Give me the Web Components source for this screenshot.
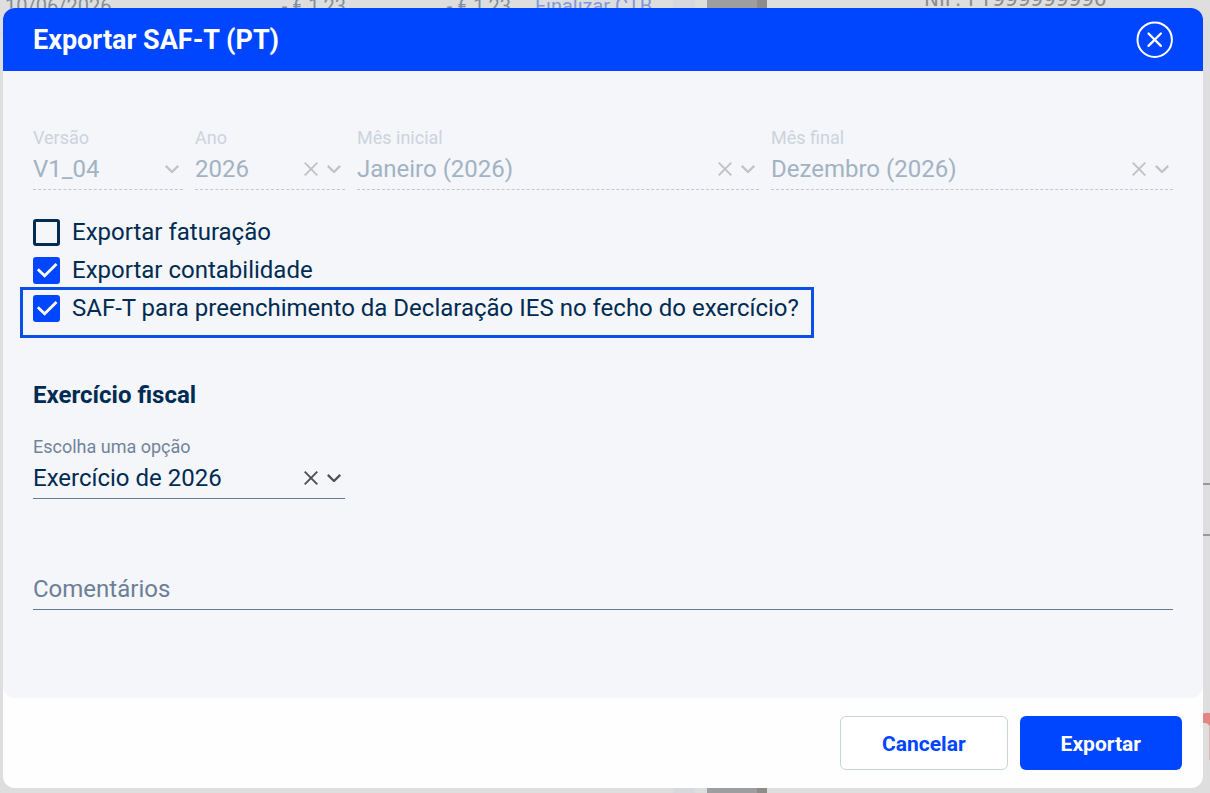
<!DOCTYPE html>
<html lang="pt">
<head>
<meta charset="utf-8">
<title>Exportar SAF-T (PT)</title>
<style>
  body { margin: 0; font-family: Roboto, "Liberation Sans", sans-serif; color: #002b52; background: #dedede; }
</style>
</head>
<body>
<app-shell>
  <page-behind slot="page"></page-behind>
  <modal-dialog heading="Exportar SAF-T (PT)">
    <field-row>
      <select-field label="Versão" value="V1_04" disabled></select-field>
      <select-field label="Ano" value="2026" disabled clearable></select-field>
      <select-field label="Mês inicial" value="Janeiro (2026)" disabled clearable></select-field>
      <select-field label="Mês final" value="Dezembro (2026)" disabled clearable></select-field>
    </field-row>
    <check-list>
      <check-option>Exportar faturação</check-option>
      <check-option checked>Exportar contabilidade</check-option>
      <check-option checked highlighted>SAF-T para preenchimento da Declaração IES no fecho do exercício?</check-option>
    </check-list>
    <form-section heading="Exercício fiscal">
      <select-field label="Escolha uma opção" value="Exercício de 2026" clearable></select-field>
    </form-section>
    <comment-field label="Comentários"></comment-field>
    <action-button slot="actions">Cancelar</action-button>
    <action-button slot="actions" primary>Exportar</action-button>
  </modal-dialog>
</app-shell>

<script>
function define(name, render) {
  customElements.define(name, class extends HTMLElement {
    connectedCallback() {
      if (this.shadowRoot) return;
      const template = document.createElement('template');
      template.innerHTML = render(this);
      this.attachShadow({ mode: 'open' }).append(template.content.cloneNode(true));
    }
  });
}

/* The page and the dialog share one grid cell, the dialog on top. */
define('app-shell', () => `
  <style>
    :host { display: grid; min-height: 100vh; grid-template: minmax(0, 1fr) / minmax(0, 1fr); }
    ::slotted(*) { grid-area: 1 / 1; }
  </style>
  <slot name="page"></slot><slot></slot>`);

define('page-behind', () => `
  <style>
    :host { display: grid; grid-template-columns: 707px 60px minmax(0, 1fr); overflow: hidden; background: #dedede; }
    .list { display: grid; grid-template-columns: 1fr 22px 12px; }
    .row { display: grid; grid-template-columns: 165px 176px 165px 1fr; column-gap: 0; margin-top: -6px; padding-left: 5px;
           height: 39px; border-bottom: 1px solid #d4d6d8; font-size: 20px; line-height: 24px; color: #7f8f9c; }
    .amount { text-align: right; }
    .row a { padding-left: 24px; color: #7f97de; text-decoration: none; }
    .track { background: #d8d9de; }
    .gap { border-right: 10px solid #8d8c8b; background: #9d9ea0; }
    .doc { display: flex; flex-direction: column; align-items: flex-end; }
    .nif { align-self: stretch; margin-top: -13px; padding-left: 157px; font: 20px/24px "DejaVu Sans", sans-serif; color: #8b8b8b; }
    .box { width: 40px; height: 49px; margin-top: 472px; border: solid #999; border-width: 2px 0; }
    .stamp { margin-top: 176px; flex: none; }
  </style>
  <div class="list">
    <div class="row"><span>10/06/2026</span><span class="amount">- € 1,23</span><span class="amount">- € 1,23</span><a href="#">Finalizar CTB</a></div>
    <div class="track"></div>
  </div>
  <div class="gap"></div>
  <div class="doc">
    <div class="nif">NIF: PT999999990</div>
    <div class="box"></div>
    <svg class="stamp" width="10" height="48" viewBox="0 0 10 48" aria-hidden="true">
      <path d="M0 3Q5 0 10 1V15Q9 12 6 11H0Z" fill="#e28583"/><path d="M9 14h1v34H9z" fill="#e3b5b4"/>
    </svg>
  </div>`);

define('modal-dialog', host => `
  <style>
    :host { display: flex; flex-direction: column; margin: 8px 7px 5px 3px; border-radius: 12px; overflow: hidden; background: #fefefe; z-index: 1; }
    header { display: flex; justify-content: space-between; align-items: center; box-sizing: border-box; height: 63px; padding: 0 30px; background: #0045ff; color: #fff; }
    h1 { margin: 0; font-size: 27px; line-height: 32px; font-weight: 700; }
    button { display: flex; padding: 0; border: 0; background: none; color: inherit; cursor: pointer; }
    main { flex: 1; padding: 56px 30px; border-radius: 0 0 12px 12px; background: #f4f6fa; }
    footer { display: flex; justify-content: flex-end; gap: 12px; padding: 18px 21px; }
  </style>
  <header>
    <h1>${host.getAttribute('heading')}</h1>
    <button type="button" aria-label="Fechar">
      <svg width="37" height="37" viewBox="0 0 37 37" fill="none" stroke="currentColor" stroke-width="2" aria-hidden="true">
        <circle cx="18.7" cy="18.7" r="17.2"/><path d="M12.5 12.5l12.4 12.4M24.9 12.5L12.5 24.9" stroke-width="2.3" stroke-linecap="round"/>
      </svg>
    </button>
  </header>
  <main><slot></slot></main>
  <footer><slot name="actions"></slot></footer>`);

define('field-row', () => `
  <style>:host { display: grid; grid-template-columns: 150px 150px 1fr 1fr; gap: 12px; }</style>
  <slot></slot>`);

define('select-field', host => {
  const off = host.hasAttribute('disabled') ? 'disabled' : '';
  const clear = host.hasAttribute('clearable') ? `
    <button type="button" aria-label="Limpar" ${off}>
      <svg width="14" height="14" viewBox="0 0 14 14" aria-hidden="true"><path d="M.7.7l12.6 12.6M13.3.7L.7 13.3"/></svg>
    </button>` : '';
  return `
  <style>
    :host { display: block; --label: #71849b; --value: #002b52; --icon: #4d4f52; --line: 1px solid #627c98; }
    :host([disabled]) { --label: #ccd3dd; --value: #a3b2c3; --icon: #c0c2c5; --line: 1px dashed #c3c8ce; }
    label { display: block; font-size: 18px; line-height: 22px; color: var(--label); }
    .control { display: grid; height: 40px; border-bottom: var(--line); }
    select { grid-area: 1 / 1; min-width: 0; margin: 0; padding: 0; border: 0; outline: 0; appearance: none; background: none;
             font: 24px/40px Roboto, "Liberation Sans", sans-serif; color: var(--value); opacity: 1; }
    .icons { grid-area: 1 / 1; justify-self: end; align-self: center; display: flex; align-items: center; gap: 9px; padding-right: 4px; pointer-events: none; }
    button { display: flex; padding: 0; border: 0; background: none; pointer-events: auto; }
    svg { fill: none; stroke: var(--icon); stroke-width: 1.9; }
  </style>
  <label for="choice">${host.getAttribute('label')}</label>
  <div class="control">
    <select id="choice" ${off}><option>${host.getAttribute('value')}</option></select>
    <div class="icons">${clear}
      <svg width="14" height="8" viewBox="0 0 14 8" aria-hidden="true"><path d="M.8.9L7 7 13.2.9" style="stroke-width:2.2"/></svg>
    </div>
  </div>`;
});

define('check-list', () => `
  <style>:host { display: flex; flex-direction: column; align-items: flex-start; gap: 11px; margin-top: 29px; }</style>
  <slot></slot>`);

define('check-option', host => `
  <style>
    :host { display: block; position: relative; }
    label { display: flex; align-items: center; gap: 12px; font-size: 24px; line-height: 27px; }
    .box { display: grid; }
    input { grid-area: 1 / 1; width: 27px; height: 27px; margin: 0; appearance: none; box-sizing: border-box; border: 3px solid #002b52; border-radius: 3px; }
    input:checked { border-color: #0045ff; background: #0045ff; }
    svg { grid-area: 1 / 1; visibility: hidden; pointer-events: none; }
    input:checked + svg { visibility: visible; }
    :host([highlighted])::after { content: ""; position: absolute; inset: -8px -15px -16px -13px; border: 3px solid #0a4fe6; pointer-events: none; }
  </style>
  <label>
    <span class="box">
      <input type="checkbox" ${host.hasAttribute('checked') ? 'checked' : ''}>
      <svg width="27" height="27" viewBox="0 0 27 27" fill="none" stroke="#fff" stroke-width="2.8" aria-hidden="true"><path d="M4.8 12.2l6.8 6.6L23.5 7"/></svg>
    </span>
    <span><slot></slot></span>
  </label>`);

define('form-section', host => `
  <style>
    :host { display: block; margin-top: 59px; }
    h2 { margin: 0 0 27px; font-size: 24px; line-height: 28px; font-weight: 700; }
    ::slotted(*) { max-width: 312px; }
  </style>
  <h2>${host.getAttribute('heading')}</h2><slot></slot>`);

define('comment-field', host => `
  <style>
    :host { display: block; margin-top: 70px; }
    input { display: block; box-sizing: border-box; width: 100%; height: 41px; padding: 0; border: 0; border-bottom: 1px solid #627c98; border-radius: 0; outline: 0;
            background: none; font: 24px/40px Roboto, "Liberation Sans", sans-serif; color: #002b52; }
    input::placeholder { color: #6c7f97; opacity: 1; }
  </style>
  <input type="text" aria-label="${host.getAttribute('label')}" placeholder="${host.getAttribute('label')}">`);

define('action-button', () => `
  <style>
    :host { display: block; }
    button { height: 54px; padding: 2px 41px 0; border: 1px solid #c9d3de; border-radius: 6px; background: #fff; cursor: pointer;
             font: 700 21px/24px Roboto, "Liberation Sans", sans-serif; color: #0045ff; }
    :host([primary]) button { border: 0; background: #0045ff; color: #fff; }
  </style>
  <button type="button"><slot></slot></button>`);
</script>
</body>
</html>
